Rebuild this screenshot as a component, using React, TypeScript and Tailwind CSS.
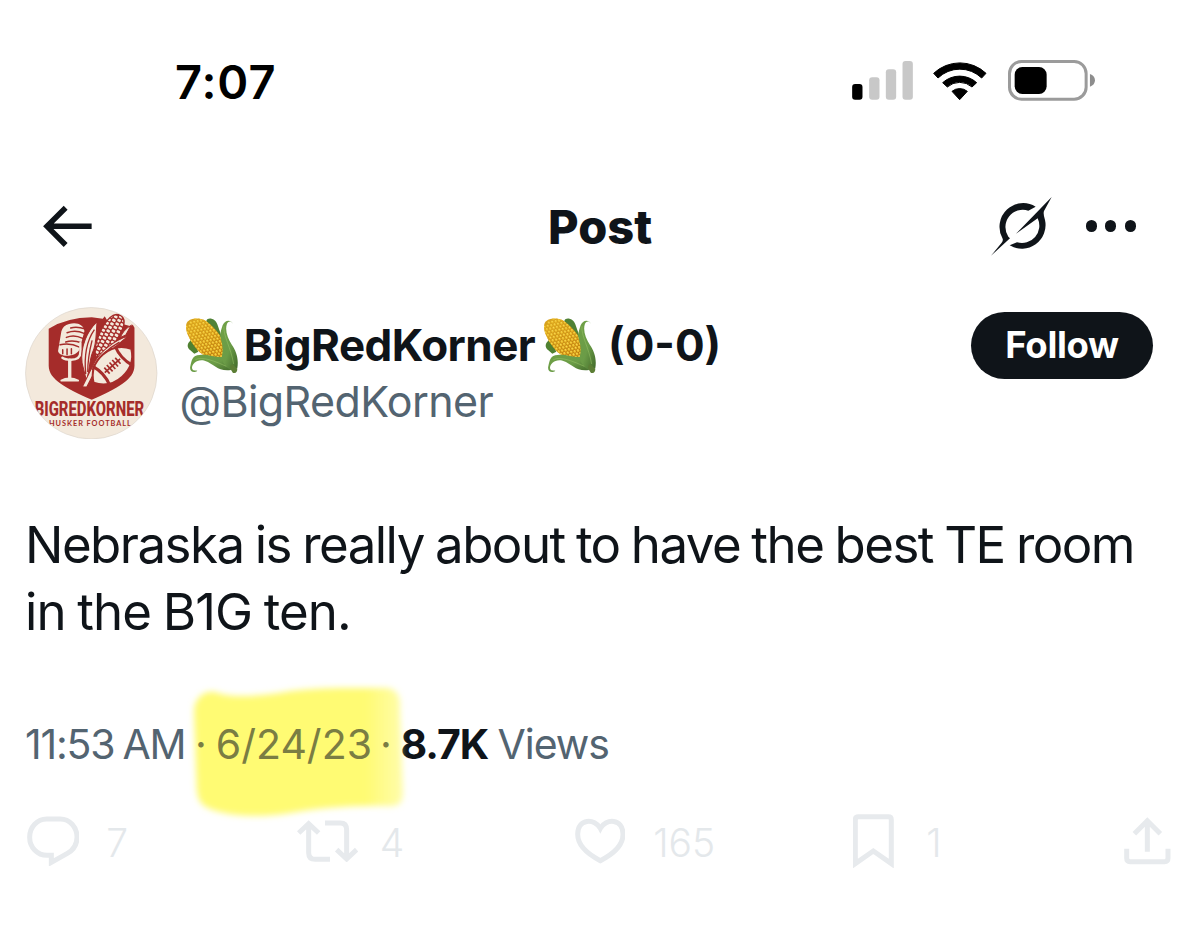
import type { ReactNode } from 'react'

function Signal() {
  return (
    <svg viewBox="96 64 182 116" className="h-[38.7px] w-[61px]">
      <rect x="96" y="133" width="31" height="47" rx="9" fill="#000" />
      <rect x="147" y="113" width="31" height="67" rx="9" fill="#c8c8c8" />
      <rect x="197" y="89" width="31" height="91" rx="9" fill="#c8c8c8" />
      <rect x="247" y="64" width="31" height="116" rx="9" fill="#c8c8c8" />
    </svg>
  )
}

function Wifi() {
  return (
    <svg viewBox="341 61 162 120" className="h-10 w-[54px]" stroke="#000" strokeWidth="3" strokeLinejoin="round">
      <path d="M343 98A114 114 0 0 1 500 98L487 112A94 94 0 0 0 356 112Z" />
      <path d="M370 126A76 76 0 0 1 472 126L458 139A56 56 0 0 0 384 139Z" />
      <path d="M398 152A36 36 0 0 1 444 152L421 177Z" />
    </svg>
  )
}

function Battery() {
  return (
    <svg viewBox="565 60 262 122" className="h-[40.7px] w-[87.3px]">
      <rect x="569.5" y="64.5" width="230" height="113" rx="36" fill="none" stroke="#9b9b9b" strokeWidth="9" />
      <rect x="585" y="81" width="96" height="81" rx="23" fill="#000" />
      <path d="M811 102Q826 107 826 121Q826 135 811 140Z" fill="#8d8d8d" />
    </svg>
  )
}

function BackArrow() {
  return (
    <svg viewBox="70 74 148 128" className="h-[42.7px] w-[49.3px]" fill="none" stroke="#0f1419" strokeWidth="16.5">
      <path d="M216 138H82M138 82L82 138L138 194" />
    </svg>
  )
}

function Grok() {
  return (
    <svg viewBox="95 51 183 177" className="h-[59px] w-[61px]" fill="#0f1419">
      <path d="M229 80A71 71 0 0 0 129 174Q133 181 127 188L95 227L152 175L147 170A52 52 0 0 1 207 92Z" />
      <path d="M277 51L170 161L235 115A52 52 0 0 1 173 187L151 196A71 71 0 0 0 257 120Q251 102 254 93Z" />
    </svg>
  )
}

// kernel rows that run along the cob
const kernels = Array.from({ length: 9 }, (_, row) =>
  Array.from({ length: 14 }, (_, i) => ({ x: -66 + i * 10.5 + (row % 2) * 5, y: -36 + row * 9 })),
).flat()

function Corn({ id }: { id: string }) {
  return (
    <svg viewBox="46 50 160 170" className="h-[56.7px] w-[53.3px] shrink-0">
      <defs>
        <linearGradient id={`leaf-${id}`} x1="0" y1="0" x2="1" y2="1">
          <stop offset="0" stopColor="#6fa046" />
          <stop offset="0.55" stopColor="#6b9c47" />
          <stop offset="1" stopColor="#41692a" />
        </linearGradient>
        <linearGradient id={`cob-${id}`} x1="0.2" y1="0" x2="0.8" y2="1">
          <stop offset="0" stopColor="#d9a520" />
          <stop offset="1" stopColor="#b8740f" />
        </linearGradient>
        <clipPath id={`clip-${id}`}>
          <path d="M50 71C54 53 88 50 105 60C125 72 155 102 163 132C168 157 163 170 142 174C112 176 86 159 68 129C56 108 46 90 50 71Z" />
        </clipPath>
      </defs>
      <path d="M62 122C52 128 51 142 62 150L74 160L86 154L66 112Z" fill="#4f8131" />
      <path d="M110 62C114 49 137 54 143 72L160 120L112 78Z" fill="#4f8136" />
      <g clipPath={`url(#clip-${id})`}>
        <rect x="46" y="50" width="130" height="130" fill={`url(#cob-${id})`} />
        <g transform="translate(108 116) rotate(48)">
          {kernels.map((k, i) => (
            <g key={i}>
              <ellipse cx={k.x} cy={k.y} rx="4.6" ry="4" fill="#eab927" />
              <ellipse cx={k.x - 1} cy={k.y - 0.5} rx="2.1" ry="1.7" fill="#f8da58" />
            </g>
          ))}
        </g>
      </g>
      <path
        d="M83 211C72 221 58 212 62 198C66 179 68 165 90 164C112 160 136 172 158 170L180 190L184 209C143 214 137 192 105 181C83 175 67 190 67 203C69 213 76 209 83 211Z"
        fill={`url(#leaf-${id})`}
      />
      <path
        d="M191 74C185 55 165 59 159 75C154 90 150 101 153 114C160 137 160 151 157 166C156 184 166 200 182 208L203 204C208 174 199 152 187 134C174 113 165 90 172 70C178 60 187 62 191 74Z"
        fill={`url(#leaf-${id})`}
      />
      <path d="M182 205C180 193 187 188 195 198L203 205C203 215 199 219 190 218Z" fill="#5c7e35" />
      <path d="M163 78C160 105 184 142 192 191M77 178C99 167 139 184 170 198" fill="none" stroke="#9cc66a" strokeWidth="2.5" opacity="0.6" />
    </svg>
  )
}

function Avatar() {
  const cream = '#f3e9dc'
  const red = '#a52c2a'
  return (
    <svg viewBox="75 50 397 397" className="size-[132.5px] shrink-0">
      <defs>
        <clipPath id="avatar">
          <circle cx="273.5" cy="248.5" r="197" />
        </clipPath>
        <clipPath id="ear">
          <path d="M287 190C285 150 315 90 340 77C358 69 374 82 369 103C362 137 330 181 294 207Z" />
        </clipPath>
      </defs>
      <g clipPath="url(#avatar)">
        <rect x="75" y="50" width="397" height="397" fill={cream} />
        <path d="M146 115Q200 82 275 81L308 85L314 78L320 88L392 108L398 103L403 112V226C403 268 350 294 275 328C200 294 146 268 146 226Z" fill={red} />

        {/* microphone */}
        <g stroke={cream} fill="none" strokeLinecap="round">
          <path d="M207 101C230 94 252 103 253 123L239 174C235 198 179 205 174 182L184 123C187 111 195 104 207 101Z" fill={cream} stroke="none" />
          <g stroke={red} strokeWidth="4.5">
            <path d="M212 113Q230 107 256 116M201 127Q226 117 252 129M199 141Q222 131 248 144M197 155Q218 147 246 158" />
            <path d="M180 163Q210 156 238 170M188 178V190M201 176V192M214 175V190" />
          </g>
          <path d="M241 157V184Q241 208 213 208Q195 208 187 202" strokeWidth="7" />
          <path d="M209 209V263" strokeWidth="10" />
          <path d="M182 271Q208 257 236 271Z" fill={cream} strokeWidth="5" />
        </g>

        {/* corn */}
        <path d="M287 190C285 150 315 90 340 77C358 69 374 82 369 103C362 137 330 181 294 207Z" fill={red} stroke={red} strokeWidth="8" />
        <g clipPath="url(#ear)" fill={cream}>
          {Array.from({ length: 8 }, (_, r) =>
            Array.from({ length: 14 }, (_, c) => (
              <rect key={`${r}-${c}`} x={-44 + r * 14} y={-78 + c * 12 + (r % 2) * 5} width="11" height="8" rx="3" transform="translate(327 139) rotate(28)" />
            )),
          )}
        </g>
        <g fill={cream} stroke={red} strokeWidth="3">
          <path d="M291 94C262 121 240 169 246 218L259 270C269 241 267 213 277 187C291 160 287 129 291 94Z" />
          <path d="M384 137C345 149 300 183 283 216L247 289L260 290L283 245C303 203 342 171 384 137Z" />
          <path d="M393 105C376 114 366 128 360 142L377 134Z" />
        </g>
        <path d="M283 118C257 155 252 200 257 251M276 150C267 185 263 209 263 245M358 155C317 177 292 208 276 239" fill="none" stroke={red} strokeWidth="4" />

        {/* football */}
        <g transform="translate(337 226) rotate(-42)">
          <path d="M-76 0Q-52 -44 0 -44Q52 -44 76 0Q52 44 0 44Q-52 44 -76 0Z" fill={cream} stroke={red} strokeWidth="6" />
          <path d="M-45 -38Q-32 0 -45 38M45 -38Q32 0 45 38" fill="none" stroke={red} strokeWidth="9" />
          <path d="M-31 0H31M-22 -12V12M-11 -13V13M0 -13V13M11 -13V13M22 -12V12" stroke={red} strokeWidth="5" />
        </g>

        <text x="104" y="377" textLength="328" lengthAdjust="spacingAndGlyphs" fill={red} fontFamily="Roboto, sans-serif" fontWeight="800" fontSize="59">
          BIGREDKORNER
        </text>
        <text x="147" y="407" textLength="245" fill={red} fontFamily="Lato, sans-serif" fontWeight="700" fontSize="22">
          HUSKER FOOTBALL
        </text>
      </g>
      <circle cx="273.5" cy="248.5" r="197" fill="none" stroke="#dcd5cc" strokeWidth="2" />
    </svg>
  )
}

function Highlight() {
  return (
    <svg viewBox="0 0 240 160" className="absolute -left-[18px] -top-[52px] h-[160px] w-[240px]">
      <defs>
        <filter id="soft" x="-10%" y="-10%" width="120%" height="120%">
          <feGaussianBlur stdDeviation="3" />
        </filter>
        <linearGradient id="marker" x1="0" x2="1">
          <stop offset="0" stopColor="#fffb73" />
          <stop offset="0.82" stopColor="#fffb73" />
          <stop offset="1" stopColor="#fffb73" stopOpacity="0.6" />
        </linearGradient>
      </defs>
      <path
        d="M17 40C17 26 27 18 38 20C56 27 85 24 114 19C145 15 180 16 209 16C221 17 224 25 223 38L226 119C226 131 223 134 212 134C177 133 141 136 113 141C84 146 43 145 26 133C18 126 20 112 19 99Z"
        fill="url(#marker)"
        filter="url(#soft)"
      />
    </svg>
  )
}

function Action({ icon, count, className }: { icon: ReactNode; count?: string; className: string }) {
  return (
    <div className={`flex h-full shrink-0 items-center text-[39px] leading-none font-light text-[#e4e8eb] ${className}`}>
      {icon}
      {count && <span className="pt-0.5">{count}</span>}
    </div>
  )
}

const line = { fill: 'none', stroke: '#e7eaed', strokeWidth: 15 }

export default function App() {
  return (
    <div className="h-[937px] w-[1200px] overflow-hidden bg-white font-['Inter',sans-serif] text-[#0f1419]">
      {/* Status bar */}
      <div className="mt-[51px] flex h-[60px] items-center pl-[175px]">
        <span className="w-[677px] text-[47px] leading-none font-semibold tracking-[0.02em] text-black">7:07</span>
        <div className="-mt-px"><Signal /></div>
        <div className="-mt-px ml-5"><Wifi /></div>
        <div className="-mt-px ml-[21px]"><Battery /></div>
      </div>

      {/* Header */}
      <div className="mt-[75px] flex h-20 items-center pl-[43px]">
        <div className="w-[505px]"><BackArrow /></div>
        <h1 className="w-[443px] text-[47px] leading-none font-extrabold">Post</h1>
        <Grok />
        <div className="ml-[33.5px] flex gap-[8.2px]">
          <i className="size-[11.4px] rounded-full bg-[#0f1419]" />
          <i className="size-[11.4px] rounded-full bg-[#0f1419]" />
          <i className="size-[11.4px] rounded-full bg-[#0f1419]" />
        </div>
      </div>

      {/* Author */}
      <div className="mt-[40.5px] flex h-[132.5px] pl-[25px]">
        <Avatar />
        <div className="ml-[23px] w-[790.5px] pt-2.5">
          <div className="flex h-[57px] items-center text-[44px] leading-none font-bold whitespace-nowrap">
            <div className="ml-1"><Corn id="a" /></div>
            <span className="ml-1.5 w-[291px] tracking-[-0.012em]">BigRedKorner</span>
            <div className="ml-2"><Corn id="b" /></div>
            <span className="ml-3">(0-0)</span>
          </div>
          <div className="-ml-px flex h-14 items-center text-[43px] leading-none tracking-[-0.014em] text-[#536471]">@BigRedKorner</div>
        </div>
        <button className="mt-[5px] h-[67px] w-[182px] rounded-full bg-[#0f1419] text-[36.5px] leading-none font-bold tracking-[-0.01em] text-white">Follow</button>
      </div>

      {/* Post text */}
      <p className="mt-[71.5px] pl-[25px] text-[51px] leading-[67px] whitespace-nowrap [word-spacing:-1.6px]">
        <span className="tracking-[-0.03em]">Nebraska is really about to have the best TE room</span>
        <br />
        <span className="tracking-[-0.019em]">in the B1G ten.</span>
      </p>

      {/* Time and views */}
      <div className="mt-[70px] flex h-[60px] items-center pl-[25px] text-[41px] leading-none whitespace-nowrap text-[#536471]">
        <span className="w-[170px] tracking-[-0.03em] [word-spacing:-2px]">11:53 AM</span>
        <div className="relative flex w-[205.5px] items-center text-[#7a7d43]">
          <Highlight />
          <span className="relative">·</span>
          <span className="relative ml-[9px]">6/24/23</span>
          <span className="relative ml-2">·</span>
        </div>
        <span className="w-[97px] font-bold tracking-[-0.025em] text-[#0f1419]">8.7K</span>
        <span className="tracking-[-0.025em]">Views</span>
      </div>

      {/* Actions */}
      <div className="mt-[36.5px] flex h-[60px] items-center pl-[26.5px]">
        <Action
          className="w-[270px] gap-[27px]"
          count="7"
          icon={
            <svg viewBox="80 44 158 152" className="h-[50.7px] w-[52.7px]" {...line}>
              <path d="M139 53H180A50 54 0 0 1 230 107C230 129 219 146 201 156L153 183V162H140A52 54 0 0 1 88 107A51 54 0 0 1 139 53Z" />
            </svg>
          }
        />
        <Action
          className="w-[278px] gap-[22px]"
          count="4"
          icon={
            <svg viewBox="888 60 184 128" className="h-[42.7px] w-[61.3px]" {...line}>
              <path d="M893 99L923 71L953 99M923 71V158Q923 178 943 178H987" />
              <path d="M972 69H1018Q1037 69 1037 90V176M1007 149L1037 177L1067 149" />
            </svg>
          }
        />
        <Action
          className="w-[278.5px] gap-[28px]"
          count="165"
          icon={
            <svg viewBox="44 56 152 138" className="h-[46px] w-[50.7px]" {...line}>
              <path d="M120 87C104 57 52 56 52 105C52 137 83 165 120 184C157 165 188 137 188 105C188 56 136 57 120 87Z" />
            </svg>
          }
        />
        <Action
          className="w-[271px] gap-[32px]"
          count="1"
          icon={
            <svg viewBox="39 45 124 162" className="h-[54px] w-[41.3px]" {...line}>
              <path d="M46 194V62Q46 53 55 53H145Q154 53 154 62V194L100 156Z" />
            </svg>
          }
        />
        <Action
          className=""
          icon={
            <svg viewBox="851 51 140 142" className="h-[47.3px] w-[46.7px]" {...line}>
              <path d="M921 155V62M882 101L921 62L960 101M859 146V175Q859 185 869 185H973Q983 185 983 175V146" />
            </svg>
          }
        />
      </div>
    </div>
  )
}
